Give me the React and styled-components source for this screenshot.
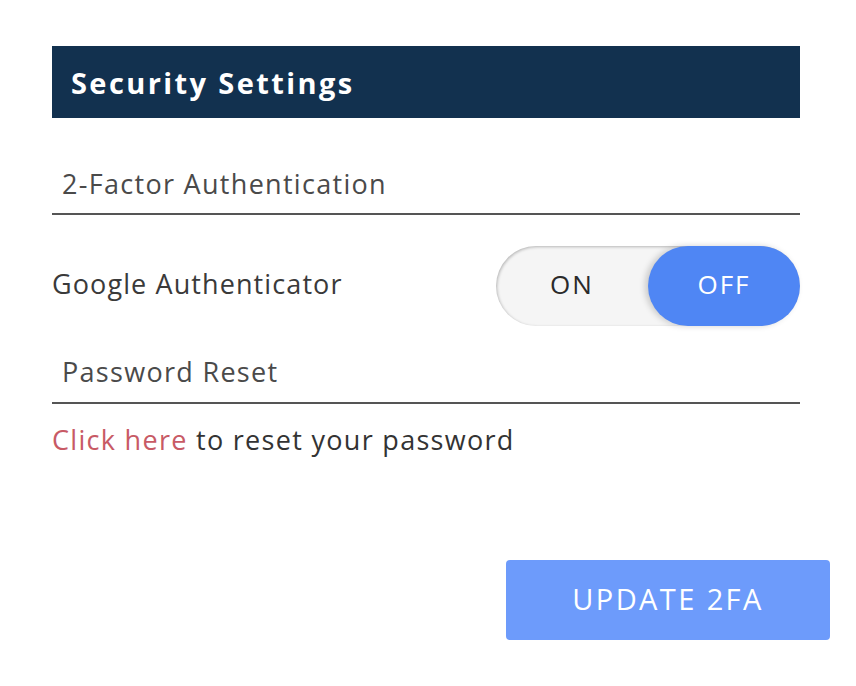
import React, { useState } from 'react';
import styled, { createGlobalStyle } from 'styled-components';

const GlobalStyle = createGlobalStyle`
  body {
    margin: 0;
    background: #ffffff;
    font-family: 'Open Sans', 'Noto Sans', sans-serif;
  }
`;

const StyledPage = styled.div`
  padding: 46px 26px 0 52px;
  width: 778px;
`;

const StyledHeader = styled.h1`
  width: 748px;
  height: 72px;
  margin: 0;
  padding: 0 19px;
  box-sizing: border-box;
  display: flex;
  align-items: center;
  background: #12314f;
  color: #ffffff;
  font-size: 29px;
  font-weight: 700;
  letter-spacing: 2.4px;
`;

const StyledSectionTitle = styled.div`
  width: 748px;
  box-sizing: border-box;
  padding: ${({ top }) => top}px 10px ${({ bottom }) => bottom}px;
  border-bottom: 2px solid #555555;
  color: #4a4a4a;
  font-size: 27px;
  line-height: 32px;
  letter-spacing: 1.3px;
`;

const StyledRow = styled.div`
  width: 748px;
  margin-top: 31px;
  display: flex;
  align-items: center;
  justify-content: space-between;
`;

const StyledLabel = styled.span`
  margin-bottom: 6px;
  color: #3a3a3a;
  font-size: 27px;
  letter-spacing: 1.1px;
`;

const StyledToggle = styled.div`
  display: flex;
  width: 304px;
  height: 80px;
  border-radius: 40px;
  background: #f5f5f5;
  box-shadow: inset 1px 1px 3px rgba(0, 0, 0, 0.25);
`;

const StyledOption = styled.button`
  flex: 1;
  border: 0;
  border-radius: 40px;
  background: ${({ active }) => (active ? '#4f86f4' : 'transparent')};
  box-shadow: ${({ active }) => (active ? '-3px 0 6px rgba(0, 0, 0, 0.18)' : 'none')};
  color: ${({ active }) => (active ? '#ffffff' : '#2a2a2a')};
  font-family: inherit;
  font-size: 26px;
  letter-spacing: 2px;
  padding: 0 0 4px;
  cursor: pointer;
`;

const StyledNote = styled.p`
  margin: 20px 0 0;
  color: #333333;
  font-size: 27px;
  line-height: 32px;
  letter-spacing: 1.3px;

  a {
    color: #c85a65;
    text-decoration: none;
  }
`;

const StyledFooter = styled.div`
  display: flex;
  justify-content: flex-end;
  margin-top: 104px;
`;

const StyledButton = styled.button`
  width: 324px;
  height: 80px;
  border: 0;
  border-radius: 4px;
  background: #6d9bfb;
  color: #ffffff;
  font-family: inherit;
  font-size: 29px;
  letter-spacing: 2.4px;
  padding: 0 0 4px;
  cursor: pointer;
`;

const App = () => {
  const [enabled, setEnabled] = useState(false);

  return (
    <StyledPage>
      <GlobalStyle />
      <StyledHeader>Security Settings</StyledHeader>

      <StyledSectionTitle top={50} bottom={13}>
        2-Factor Authentication
      </StyledSectionTitle>

      <StyledRow>
        <StyledLabel>Google Authenticator</StyledLabel>
        <StyledToggle>
          <StyledOption active={enabled} onClick={() => setEnabled(true)}>
            ON
          </StyledOption>
          <StyledOption active={!enabled} onClick={() => setEnabled(false)}>
            OFF
          </StyledOption>
        </StyledToggle>
      </StyledRow>

      <StyledSectionTitle top={30} bottom={14}>
        Password Reset
      </StyledSectionTitle>

      <StyledNote>
        <a href="#reset">Click here</a> to reset your password
      </StyledNote>

      <StyledFooter>
        <StyledButton>UPDATE 2FA</StyledButton>
      </StyledFooter>
    </StyledPage>
  );
};

export default App;
